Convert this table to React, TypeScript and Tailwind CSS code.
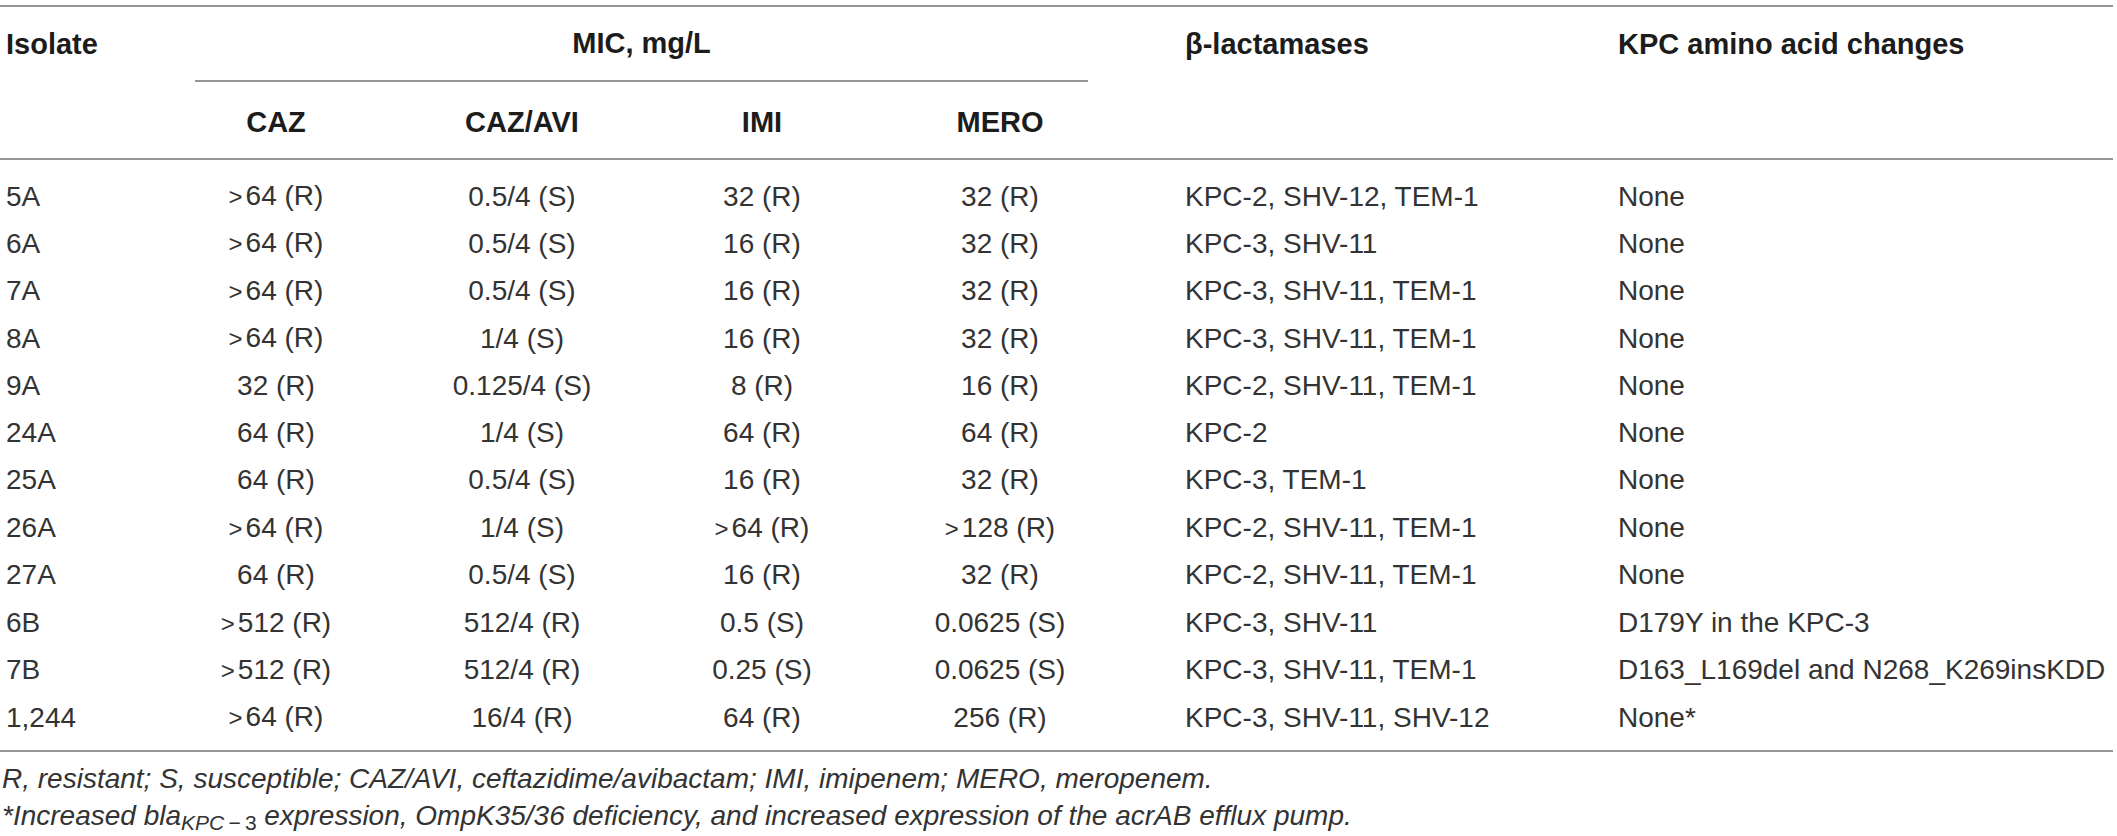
import React from "react";

type Row = [string, string, string, string, string, string, string];

const rows: Row[] = [
  ["5A", ">64 (R)", "0.5/4 (S)", "32 (R)", "32 (R)", "KPC-2, SHV-12, TEM-1", "None"],
  ["6A", ">64 (R)", "0.5/4 (S)", "16 (R)", "32 (R)", "KPC-3, SHV-11", "None"],
  ["7A", ">64 (R)", "0.5/4 (S)", "16 (R)", "32 (R)", "KPC-3, SHV-11, TEM-1", "None"],
  ["8A", ">64 (R)", "1/4 (S)", "16 (R)", "32 (R)", "KPC-3, SHV-11, TEM-1", "None"],
  ["9A", "32 (R)", "0.125/4 (S)", "8 (R)", "16 (R)", "KPC-2, SHV-11, TEM-1", "None"],
  ["24A", "64 (R)", "1/4 (S)", "64 (R)", "64 (R)", "KPC-2", "None"],
  ["25A", "64 (R)", "0.5/4 (S)", "16 (R)", "32 (R)", "KPC-3, TEM-1", "None"],
  ["26A", ">64 (R)", "1/4 (S)", ">64 (R)", ">128 (R)", "KPC-2, SHV-11, TEM-1", "None"],
  ["27A", "64 (R)", "0.5/4 (S)", "16 (R)", "32 (R)", "KPC-2, SHV-11, TEM-1", "None"],
  ["6B", ">512 (R)", "512/4 (R)", "0.5 (S)", "0.0625 (S)", "KPC-3, SHV-11", "D179Y in the KPC-3"],
  ["7B", ">512 (R)", "512/4 (R)", "0.25 (S)", "0.0625 (S)", "KPC-3, SHV-11, TEM-1", "D163_L169del and N268_K269insKDD"],
  ["1,244", ">64 (R)", "16/4 (R)", "64 (R)", "256 (R)", "KPC-3, SHV-11, SHV-12", "None*"],
];

// values like ">64" get a small gap after the relation sign
function Val({ v }: { v: string }) {
  if (v.startsWith(">")) {
    return (
      <span>
        <span className="mr-[3px] text-[24px]">&gt;</span>
        {v.slice(1)}
      </span>
    );
  }
  return <span>{v}</span>;
}

const cols = "grid grid-cols-[180px_192px_300px_180px_296px_452px_1fr]";

export default function App() {
  return (
    <div className="min-h-screen bg-white pt-[5px] font-['Liberation_Sans',Arial,sans-serif]">
      <div className="w-[2113px]">
        {/* Header */}
        <div className="border-t-2 border-[#949494] text-[29px] font-bold text-[#1c1c1c]">
          <div className={`${cols} h-[75px] items-center`}>
            <div className="pl-[6px]">Isolate</div>
            <div className="col-span-4 ml-[15px] mr-[60px] flex h-full items-center justify-center border-b-2 border-[#949494]">
              MIC, mg/L
            </div>
            <div className="pl-[37px]">β-lactamases</div>
            <div className="pl-[18px]">KPC amino acid changes</div>
          </div>
          <div className={`${cols} h-[76px] items-center pt-[6px]`}>
            <div />
            <div className="text-center">CAZ</div>
            <div className="text-center">CAZ/AVI</div>
            <div className="text-center">IMI</div>
            <div className="text-center">MERO</div>
            <div />
            <div />
          </div>
        </div>

        {/* Body */}
        <div className="border-t-2 border-b-2 border-[#949494] pt-[12px] pb-[9px] text-[28px] text-[#333]">
          {rows.map((r) => (
            <div key={r[0]} className={`${cols} h-[47.4px] items-center leading-[47.4px] whitespace-nowrap`}>
              <div className="pl-[6px]">{r[0]}</div>
              <div className="text-center"><Val v={r[1]} /></div>
              <div className="text-center"><Val v={r[2]} /></div>
              <div className="text-center"><Val v={r[3]} /></div>
              <div className="text-center"><Val v={r[4]} /></div>
              <div className="pl-[37px]">{r[5]}</div>
              <div className="pl-[18px]">{r[6]}</div>
            </div>
          ))}
        </div>

        {/* Footnotes */}
        <div className="pt-[8px] pl-[2px] text-[28px] italic leading-[37px] text-[#333]">
          <p>R, resistant; S, susceptible; CAZ/AVI, ceftazidime/avibactam; IMI, imipenem; MERO, meropenem.</p>
          <p>
            *Increased bla
            <sub className="text-[21px]">
              KPC<span className="not-italic">{"\u2009−\u20093"}</span>
            </sub>{" "}
            expression, OmpK35/36 deficiency, and increased expression of the acrAB efflux pump.
          </p>
        </div>
      </div>
    </div>
  );
}
